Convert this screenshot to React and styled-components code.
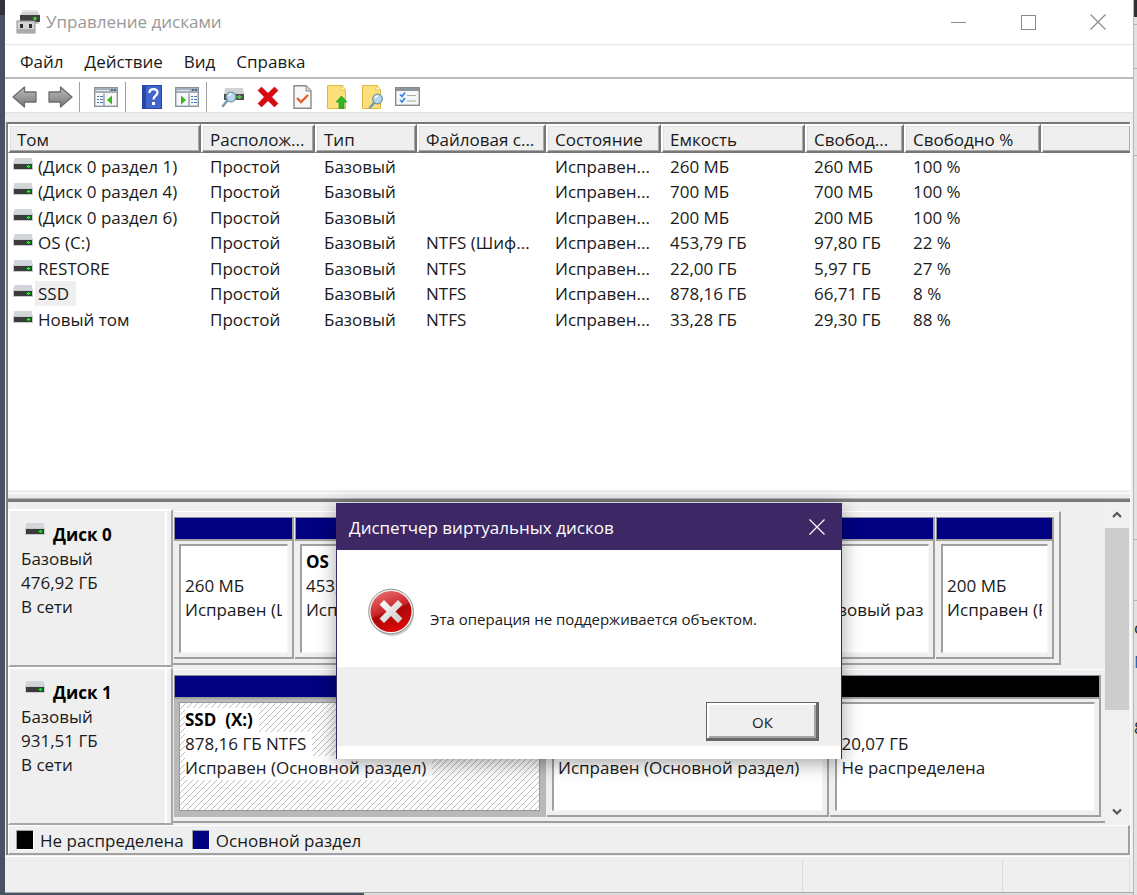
import React from 'react';
import styled, { createGlobalStyle, css } from 'styled-components';

const GlobalStyle = createGlobalStyle`
  * { box-sizing: border-box; }
  body {
    margin: 0;
    background: #4a5163;
    color: #1a1a1a;
    font-family: 'Open Sans', 'Noto Sans', sans-serif;
    font-size: 17px;
  }
  button { font: inherit; color: inherit; border: 0; background: none; padding: 0; }
`;

const Desktop = styled.div`
  position: relative;
  display: flex;
  min-height: 100vh;
  overflow: hidden;
`;

const LeftEdge = styled.div`
  flex: 0 0 5px;
  background: linear-gradient(#313338 0 15px, #4a5163 15px);
`;

const RightEdge = styled.div`
  flex: 0 0 4px;
  overflow: hidden;
  background: #e2e2e2;
  border-left: 1px solid #b8b8b8;
`;

const EdgeSlice = styled.div`
  height: ${(p) => p.$h}px;
  line-height: 26px;
  overflow: hidden;
  color: ${(p) => p.$color || '#222'};
  background: ${(p) => p.$bg || 'transparent'};
  border-bottom: ${(p) => (p.$line ? '1px solid #b5b5b5' : '0')};
`;

const Column = styled.div`
  flex: 1;
  min-width: 0;
  display: flex;
  flex-direction: column;
`;

const Window = styled.main`
  flex: 1;
  display: flex;
  flex-direction: column;
  background: #efefef;
`;

const DesktopBottom = styled.div`
  height: 3px;
  border-top: 1px solid #a9a9a9;
  background: linear-gradient(90deg, #4a5163 0 359px, #dcdcdc 359px);
`;

const TitleBar = styled.header`
  display: flex;
  align-items: center;
  height: 45px;
  padding-left: 11px;
  background: #fff;
  border-bottom: 1px solid #e6e6e6;
`;

const Title = styled.h1`
  flex: 1;
  margin: 0 0 0 5px;
  font-size: 17px;
  font-weight: 400;
  line-height: 42px;
  color: #999;
`;

const CaptionButton = styled.button`
  display: grid;
  place-items: center;
  width: 70px;
  height: 42px;
`;

const MenuBar = styled.nav`
  display: flex;
  gap: 21px;
  height: 34px;
  padding-left: 15px;
  background: #fff;
  border-bottom: 2px solid #b9bdc1;
`;

const MenuItem = styled.button`
  line-height: 34px;
  white-space: nowrap;
`;

const Toolbar = styled.div`
  display: flex;
  height: 34px;
  padding-left: 2px;
  background: #fff;
  border-bottom: 1px solid #e2e2e2;
`;

const ToolButton = styled.button`
  display: grid;
  place-items: center;
  width: 35px;
  padding-top: 2px;
`;

const ToolSeparator = styled.span`
  width: 1px;
  margin: 3px 8px 0 2px;
  background: #a0a0a0;
`;

const Frame = styled.div`
  flex: 1;
  display: flex;
  flex-direction: column;
  margin: 9px 2px 0 1px;
  border-left: 2px solid #808080;
  border-right: 1px solid #fff;
`;

const VolumePane = styled.section`
  flex: 1;
  min-height: 240px;
  background: #fff;
  border-top: 2px solid #777;
`;

const VolumeTable = styled.table`
  width: 100%;
  table-layout: fixed;
  border-collapse: separate;
  border-spacing: 0;
  line-height: 25px;

  th, td { overflow: hidden; white-space: nowrap; text-align: left; font-weight: 400; }
  th {
    height: 29px;
    padding: 3px 0 0 7px;
    line-height: 22px;
    background: #efefef;
    border: 2px solid #fff;
    border-right-color: #777;
    border-bottom-color: #777;
    box-shadow: inset -1px -1px 0 #a8a8a8, inset 1px 1px 0 #e0e0e0;
  }
  th:last-child { border-right: 0; }
  td { height: 26px; padding: 0 0 0 9px; }
  tbody tr:nth-child(even) td { height: 25px; }
  td:first-child { padding-left: 5px; }
`;

const VolumeName = styled.span`
  display: flex;
  align-items: center;

  svg { margin-bottom: 5px; }
`;

const VolumeLabel = styled.span`
  margin-left: 2px;
  padding: 0 7px 0 3px;
  background: ${(p) => (p.$selected ? '#efefef' : 'transparent')};
`;

const Splitter = styled.div`
  height: 12px;
  background: #ebebeb;
  border-top: 3px solid #efefef;
  border-bottom: 3px solid #7a7a7a;
  box-shadow: inset 0 1px 0 #fff, inset 0 -1px 0 #b5b5b5;
`;

const GraphPane = styled.section`
  display: flex;
`;

const DiskList = styled.div`
  flex: 1;
  min-width: 0;
  padding-top: 7px;
`;

const DiskRow = styled.article`
  display: flex;
  height: 158px;
`;

const DiskInfo = styled.div`
  flex: 0 0 165px;
  padding: 12px 0 0 11px;
  line-height: 24px;
  border: solid #fff;
  border-width: 2px 2px 0 2px;
  border-right-color: #a6a6a6;
  border-bottom: 2px solid #a6a6a6;
  box-shadow: inset -4px 0 0 #efefef, inset -6px 0 0 #fff;
`;

const DiskHeading = styled.h2`
  display: flex;
  align-items: flex-start;
  gap: 8px;
  margin: 0;
  padding-left: 4px;
  font-size: 17px;
  line-height: 24px;
  font-weight: 700;
  color: #000;
`;

const Partitions = styled.div`
  flex: 1;
  min-width: 0;
  display: flex;
  gap: 1px;
  margin: 2px ${(p) => p.$inset}px 2px 0;
  padding: 5px ${(p) => (p.$inset ? 5 : 4)}px 4px 1px;
  border: 1px solid #a0a0a0;
  border-left: 0;
  border-top-color: #fff;
  border-right-width: ${(p) => (p.$inset ? 2 : 0)}px;
  border-bottom-width: 2px;
`;

const PartitionCell = styled.div`
  flex: ${(p) => p.$size} 1 0;
  min-width: 0;
  display: flex;
  flex-direction: column;
  border-right: 2px solid #a0a0a0;
  border-bottom: 2px solid #a0a0a0;
  ${(p) => p.$selected && css`border-color: #b9b9b9;`}
`;

const PartitionBar = styled.div`
  height: 24px;
  background: ${(p) => p.$color};
  border: 1px solid #8c8c9c;
  border-bottom: 2px solid #a0a0a0;
  border-right-width: 0;
`;

const PartitionBody = styled.div`
  flex: 1;
  display: flex;
  padding: 3px 4px 4px 5px;
  background: ${(p) => (p.$selected ? '#b9b9b9' : '#efefef')};
`;

const PartitionBox = styled.div`
  flex: 1;
  min-width: 0;
  padding: 4px 5px 0 4px;
  line-height: 24px;
  border: 1px solid #f6f6f6;
  border-top: 2px solid #a0a0a0;
  border-left: 2px solid #a0a0a0;
  background: #fff;
  ${(p) => p.$selected && css`
    border: 1px solid #999;
    padding: 5px 5px 0 5px;
    background: linear-gradient(to bottom right, #fff 43%, #bdbdbd 48%, #bdbdbd 52%, #fff 57%) 0 0 / 6px 6px;
  `}
`;

const PartitionText = styled.div`
  overflow: hidden;
`;

const PartitionLine = styled.div`
  width: fit-content;
  min-height: 24px;
  padding-right: 6px;
  white-space: pre;
  background: #fff;
  font-weight: ${(p) => (p.$bold ? 700 : 400)};
  color: ${(p) => (p.$bold ? '#000' : 'inherit')};
`;

const ScrollTrack = styled.div`
  flex: 0 0 25px;
  display: flex;
  flex-direction: column;
  padding-right: 1px;
  background: #f0f0f0;
`;

const ScrollButton = styled.button`
  display: grid;
  place-items: center;
  height: 26px;
`;

const ScrollThumb = styled.div`
  height: 182px;
  margin-bottom: auto;
  background: #cdcdcd;
`;

const Legend = styled.div`
  display: flex;
  align-items: center;
  gap: 8px;
  height: 30px;
  padding: 1px 0 0 7px;
  border: 1px solid #fff;
  border-right: 2px solid #a0a0a0;
  border-bottom: 2px solid #a0a0a0;
`;

const Swatch = styled.span`
  width: 18px;
  height: 20px;
  background: ${(p) => p.$color};
  border: 1px solid #a0a0a0;
  border-right-color: #fff;
  border-bottom-color: #fff;
`;

const LegendItem = styled.span`
  display: flex;
  align-items: center;
  gap: 6px;
`;

const StatusBar = styled.footer`
  display: flex;
  height: 36px;
  margin: 1px 3px 0 0;
  padding-top: 3px;
  border-top: 1px solid #fff;
`;

const StatusCell = styled.span`
  flex: ${(p) => p.$flex};
  border-right: 1px solid #dcdcdc;
`;

const Dialog = styled.div`
  position: absolute;
  left: 336px;
  top: 503px;
  width: 506px;
  background: #fff;
  border: 1px solid #3d2865;
  border-bottom: 0;
  box-shadow: 0 4px 18px rgba(0, 0, 0, 0.36);
`;

const DialogTitle = styled.div`
  display: flex;
  justify-content: space-between;
  align-items: center;
  height: 46px;
  padding: 0 2px 0 12px;
  background: #3d2865;
  color: #fff;
`;

const DialogHeading = styled.h2`
  margin: 0;
  font-size: 17px;
  font-weight: 400;
`;

const DialogClose = styled.button`
  display: grid;
  place-items: center;
  width: 44px;
  height: 46px;
`;

const DialogBody = styled.div`
  display: flex;
  align-items: center;
  gap: 14px;
  height: 117px;
  padding: 6px 0 0 29px;
`;

const DialogMessage = styled.p`
  margin: 14px 0 0;
  font-size: 15px;
  line-height: 20px;
  white-space: nowrap;
`;

const DialogFooter = styled.div`
  display: flex;
  justify-content: flex-end;
  height: 79px;
  margin-bottom: 13px;
  padding: 35px 22px 5px 0;
  background: #efefef;
`;

const OkButton = styled.button`
  width: 113px;
  height: 39px;
  font-size: 15px;
  background: #efefef;
  border: 1px solid #666;
  box-shadow: inset -2px -2px 0 #696969, inset 2px 2px 0 #fff, inset -4px -4px 0 #a5a5a5;
`;

const SmallDrive = () => (
  <svg width="20" height="12" viewBox="0 0 20 12" aria-hidden="true">
    <path d="M1.500 0h17L20 6H0z" fill="#d2d5da" />
    <rect y="5" width="20" height="7" fill="#c8cacd" />
    <rect x="1" y="6" width="18" height="5" fill="#3b3b3b" />
    <rect x="13" y="7" width="5" height="3" fill="#156b20" />
    <rect x="14" y="8" width="3" height="1" fill="#4dff4d" />
    <rect x="15" y="7" width="1" height="3" fill="#35d83b" />
  </svg>
);

const AppIcon = () => (
  <svg width="25" height="24" viewBox="0 0 25 24" aria-hidden="true">
    <path d="M7 0h14l3 6H4z" fill="#cfd2d4" />
    <path d="M7 0h14l1 2H6z" fill="#e6e7e8" />
    <rect x="4" y="5" width="20" height="7" fill="#404241" />
    <path d="M16 12h7v2h-7z" fill="#c9cbcc" />
    <circle cx="19" cy="8.500" r="1.700" fill="#2fe02f" />
    <rect x="1" y="11" width="18" height="12" fill="#d3d4d5" stroke="#8d8f91" />
    <path d="M1 19h18v4H1z" fill="#a9abad" />
    <rect x="4" y="14" width="3" height="4" fill="#2f2f2f" />
    <rect x="13" y="14" width="3" height="4" fill="#2f2f2f" />
  </svg>
);

const Arrow = ({ flip }) => (
  <svg width="26" height="24" viewBox="0 0 26 24" aria-hidden="true">
    <defs>
      <linearGradient id={flip ? 'ar' : 'al'} x2="0" y2="1">
        <stop stopColor="#bdbdbd" /><stop offset="1" stopColor="#777" />
      </linearGradient>
    </defs>
    <path
      d="M1 12L12.500 2v5H24v10H12.500v5z"
      transform={flip ? 'translate(26 0) scale(-1 1)' : undefined}
      fill={`url(#${flip ? 'ar' : 'al'})`} stroke="#6c6c6c" strokeWidth="1.300" strokeLinejoin="round"
    />
  </svg>
);

const PanelIcon = ({ right }) => (
  <svg width="24" height="20" viewBox="0 0 24 20" aria-hidden="true">
    <rect x=".7" y=".7" width="22.600" height="18.600" fill="#f5f7f8" stroke="#8c949b" strokeWidth="1.400" />
    <rect x="1" y="1" width="22" height="5" fill="#a3afba" />
    <path d="M2 3.500h13" stroke="#e4e9ee" />
    <path d="M17 3h2M20 3h2" stroke="#34506e" strokeWidth="1.500" />
    <path d={right ? 'M14 6.500v13' : 'M10 6.500v13'} stroke="#8c949b" strokeWidth="1.300" />
    {right
      ? <path d="M16 9.500h2M19 9.500h3M16 12.500h2M19 12.500h3M16 15.500h2M19 15.500h3" stroke="#4678b4" />
      : <path d="M3 9.500h2M6 9.500h3M3 12.500h2M6 12.500h3M3 15.500h2M6 15.500h3" stroke="#4678b4" />}
    <path d={right ? 'M6 8.500l5 4.500-5 4.500z' : 'M18 8.500l-5 4.500 5 4.500z'} fill="#3fb21f" />
  </svg>
);

const HelpIcon = () => (
  <svg width="20" height="24" viewBox="0 0 20 24" aria-hidden="true">
    <rect width="20" height="24" fill="#2a45a5" />
    <rect x="4" y="1" width="15" height="22" fill="#4065cf" />
    <path d="M7.500 8c0-5 8-5 8-.5 0 3.200-4 3.200-4 7" fill="none" stroke="#fff" strokeWidth="2.300" />
    <rect x="10" y="17" width="3" height="3" fill="#fff" />
  </svg>
);

const Lens = ({ cx, cy, tail }) => (
  <g>
    <path d={tail} stroke="#7397b4" strokeWidth="2.400" strokeLinecap="round" />
    <circle cx={cx} cy={cy} r="4.800" fill="#b6d8ea" stroke="#7595ac" strokeWidth="1.300" />
    <path d={`M${cx - 2.5} ${cy - 1}q1-2 3-2`} stroke="#fff" strokeWidth="1.300" fill="none" />
  </g>
);

const DriveSearchIcon = () => (
  <svg width="24" height="22" viewBox="0 0 24 22" aria-hidden="true">
    <path d="M4 2h18l1 7H3z" fill="#d0d2d3" />
    <rect x="3" y="8" width="20" height="6" fill="#4d4f50" />
    <path d="M16 11h5M18.500 9v4" stroke="#35e035" strokeWidth="1.500" />
    <Lens cx={10} cy={11} tail="M6 15L2 20" />
  </svg>
);

const DeleteIcon = () => (
  <svg width="22" height="22" viewBox="0 0 22 22" aria-hidden="true">
    <path d="M4.500 1L11 7.300 17.500 1 21 4.500 14.700 11 21 17.500 17.500 21 11 14.700 4.500 21 1 17.500 7.300 11 1 4.500z" fill="#da0a14" stroke="#b00" strokeWidth=".5" />
  </svg>
);

const CheckDocIcon = () => (
  <svg width="19" height="24" viewBox="0 0 19 24" aria-hidden="true">
    <path d="M1 .7h12l5 5v17.600H1z" fill="#f7f8fa" stroke="#8a8a8a" strokeWidth="1.400" />
    <path d="M13 1v5h5" fill="#ddd" stroke="#8a8a8a" />
    <path d="M4 13l4 4 7-7" fill="none" stroke="#ee5a24" strokeWidth="2.400" />
  </svg>
);

const FolderIcon = ({ search }) => (
  <svg width="21" height="24" viewBox="0 0 21 24" aria-hidden="true">
    <path d="M.5.500h15l3 5v18H.5z" fill="#fbdf7b" stroke="#dfb93e" />
    <path d="M13 5h5.500L15.500.500z" fill="#fff1b8" stroke="#dfb93e" strokeWidth=".6" />
    {search
      ? <Lens cx={15.5} cy={14} tail="M12 18L8 22.500" />
      : <path d="M14.500 11l5.500 6h-3v6.500h-5V17H9z" fill="#2fb52b" stroke="#169018" strokeWidth=".6" />}
  </svg>
);

const ChecklistIcon = () => (
  <svg width="25" height="19" viewBox="0 0 25 19" aria-hidden="true">
    <rect x=".7" y=".7" width="23.600" height="17.600" fill="#f6f7f8" stroke="#878b90" strokeWidth="1.400" />
    <rect x="1" y="1" width="23" height="3" fill="#8e959c" />
    <path d="M5 7.500l2 2 3-4M5 13l2 2 3-4" fill="none" stroke="#3386e0" strokeWidth="1.700" />
    <path d="M12 8.500h9M12 14h9" stroke="#aaa" strokeWidth="1.200" />
  </svg>
);

const ErrorIcon = () => (
  <svg width="50" height="50" viewBox="0 0 50 50" aria-hidden="true">
    <defs>
      <linearGradient id="err" x1=".2" y1="0" x2=".6" y2="1">
        <stop stopColor="#e87070" /><stop offset=".48" stopColor="#cb2429" />
        <stop offset=".55" stopColor="#a90709" /><stop offset="1" stopColor="#e00a0a" />
      </linearGradient>
      <linearGradient id="errx" x2="1" y2="1">
        <stop stopColor="#fff" /><stop offset="1" stopColor="#c9c9c9" />
      </linearGradient>
    </defs>
    <ellipse cx="26" cy="27" rx="22" ry="22" fill="#000" opacity=".2" />
    <circle cx="25" cy="24.500" r="22.300" fill="#f3f3f3" stroke="#929292" />
    <circle cx="25" cy="24.500" r="20.500" fill="url(#err)" />
    <path d="M18 13l7 7 7-7 4.500 4.500-7 7 7 7L32 36l-7-7-7 7-4.500-4.500 7-7-7-7z" fill="url(#errx)" />
  </svg>
);

const Chevron = ({ down }) => (
  <svg width="10" height="8" viewBox="0 0 10 8" aria-hidden="true">
    <path d={down ? 'M1 1.500l4 4 4-4' : 'M1 6l4-4 4 4'} fill="none" stroke="#555" strokeWidth="2.200" />
  </svg>
);

const CloseGlyph = ({ color }) => (
  <svg width="16" height="16" viewBox="0 0 16 16" aria-hidden="true">
    <path d="M.5.500l15 15M15.500.500l-15 15" stroke={color} strokeWidth="1.200" />
  </svg>
);

const NAVY = '#000080';

const columns = [
  ['Том', 193], ['Располож...', 114], ['Тип', 102], ['Файловая с...', 129], ['Состояние', 115],
  ['Емкость', 144], ['Свобод...', 99], ['Свободно %', 137],
];

const volumes = [
  ['(Диск 0 раздел 1)', '', '260 МБ', '260 МБ', '100 %'],
  ['(Диск 0 раздел 4)', '', '700 МБ', '700 МБ', '100 %'],
  ['(Диск 0 раздел 6)', '', '200 МБ', '200 МБ', '100 %'],
  ['OS (C:)', 'NTFS (Шиф...', '453,79 ГБ', '97,80 ГБ', '22 %'],
  ['RESTORE', 'NTFS', '22,00 ГБ', '5,97 ГБ', '27 %'],
  ['SSD', 'NTFS', '878,16 ГБ', '66,71 ГБ', '8 %'],
  ['Новый том', 'NTFS', '33,28 ГБ', '29,30 ГБ', '88 %'],
];

const disks = [
  {
    name: 'Диск 0', size: '476,92 ГБ', inset: 44,
    parts: [
      { size: 119, lines: ['', '260 МБ', 'Исправен (Шифрованный)'] },
      { size: 423, lines: ['OS  (C:)', '453,79 ГБ NTFS', 'Исправен (Загрузка)'] },
      { size: 218, lines: ['', '22,00 ГБ NTFS', 'Исправен (Базовый раздел)'] },
      { size: 117, lines: ['', '200 МБ', 'Исправен (Раздел)'] },
    ],
  },
  {
    name: 'Диск 1', size: '931,51 ГБ', inset: 0,
    parts: [
      { size: 372, selected: true, lines: ['SSD  (X:)', '878,16 ГБ NTFS', 'Исправен (Основной раздел)'] },
      { size: 282, lines: ['', '', 'Исправен (Основной раздел)'] },
      { size: 270, color: '#000', lines: ['', '20,07 ГБ', 'Не распределена'] },
    ],
  },
];

const Partition = ({ size, selected, color = NAVY, lines }) => (
  <PartitionCell $size={size} $selected={selected}>
    <PartitionBar $color={color} />
    <PartitionBody $selected={selected}>
      <PartitionBox $selected={selected}>
        <PartitionText>
          {lines.map((line, i) => <PartitionLine key={i} $bold={i === 0}>{line}</PartitionLine>)}
        </PartitionText>
      </PartitionBox>
    </PartitionBody>
  </PartitionCell>
);

export default function App() {
  return (
    <Desktop>
      <GlobalStyle />
      <LeftEdge />
      <Column>
        <Window>
          <TitleBar>
            <AppIcon />
            <Title>Управление дисками</Title>
            <CaptionButton aria-label="Свернуть">
              <svg width="15" height="1"><rect width="15" height="1" fill="#8a8a8a" /></svg>
            </CaptionButton>
            <CaptionButton aria-label="Развернуть">
              <svg width="15" height="15"><rect x=".5" y=".5" width="14" height="14" fill="none" stroke="#8a8a8a" /></svg>
            </CaptionButton>
            <CaptionButton aria-label="Закрыть"><CloseGlyph color="#8a8a8a" /></CaptionButton>
          </TitleBar>
          <MenuBar>
            {['Файл', 'Действие', 'Вид', 'Справка'].map((m) => <MenuItem key={m}>{m}</MenuItem>)}
          </MenuBar>
          <Toolbar>
            <ToolButton aria-label="Назад"><Arrow /></ToolButton>
            <ToolButton aria-label="Вперед"><Arrow flip /></ToolButton>
            <ToolSeparator />
            <ToolButton aria-label="Дерево консоли"><PanelIcon /></ToolButton>
            <ToolSeparator />
            <ToolButton aria-label="Справка"><HelpIcon /></ToolButton>
            <ToolButton aria-label="Панель действий"><PanelIcon right /></ToolButton>
            <ToolSeparator />
            <ToolButton aria-label="Обновить"><DriveSearchIcon /></ToolButton>
            <ToolButton aria-label="Удалить"><DeleteIcon /></ToolButton>
            <ToolButton aria-label="Свойства"><CheckDocIcon /></ToolButton>
            <ToolButton aria-label="Открыть"><FolderIcon /></ToolButton>
            <ToolButton aria-label="Обзор"><FolderIcon search /></ToolButton>
            <ToolButton aria-label="Параметры"><ChecklistIcon /></ToolButton>
          </Toolbar>

          <Frame>
            <VolumePane>
              <VolumeTable>
                <colgroup>
                  {columns.map(([name, width]) => <col key={name} width={width} />)}
                  <col />
                </colgroup>
                <thead>
                  <tr>
                    {columns.map(([name]) => <th key={name} scope="col">{name}</th>)}
                    <th aria-hidden="true" />
                  </tr>
                </thead>
                <tbody>
                  {volumes.map(([name, fs, size, free, percent]) => (
                    <tr key={name}>
                      <td>
                        <VolumeName>
                          <SmallDrive />
                          <VolumeLabel $selected={name === 'SSD'}>{name}</VolumeLabel>
                        </VolumeName>
                      </td>
                      <td>Простой</td>
                      <td>Базовый</td>
                      <td>{fs}</td>
                      <td>Исправен...</td>
                      <td>{size}</td>
                      <td>{free}</td>
                      <td>{percent}</td>
                      <td />
                    </tr>
                  ))}
                </tbody>
              </VolumeTable>
            </VolumePane>
            <Splitter />
            <GraphPane>
              <DiskList>
                {disks.map((disk) => (
                  <DiskRow key={disk.name}>
                    <DiskInfo>
                      <DiskHeading><SmallDrive />{disk.name}</DiskHeading>
                      <div>Базовый</div>
                      <div>{disk.size}</div>
                      <div>В сети</div>
                    </DiskInfo>
                    <Partitions $inset={disk.inset}>
                      {disk.parts.map((part) => <Partition key={part.size} {...part} />)}
                    </Partitions>
                  </DiskRow>
                ))}
              </DiskList>
              <ScrollTrack>
                <ScrollButton aria-label="Прокрутить вверх"><Chevron /></ScrollButton>
                <ScrollThumb />
                <ScrollButton aria-label="Прокрутить вниз"><Chevron down /></ScrollButton>
              </ScrollTrack>
            </GraphPane>
            <Legend>
              <LegendItem><Swatch $color="#000" />Не распределена</LegendItem>
              <LegendItem><Swatch $color={NAVY} />Основной раздел</LegendItem>
            </Legend>
          </Frame>
          <StatusBar>
            <StatusCell $flex="1 1 0" />
            <StatusCell $flex="0 0 200px" />
            <StatusCell $flex="0 0 127px" />
          </StatusBar>
        </Window>
        <DesktopBottom />
      </Column>
      <RightEdge>
        <EdgeSlice $h={17} $bg="#2f3033" />
        <EdgeSlice $h={8} $line />
        <EdgeSlice $h={44} $line />
        <EdgeSlice $h={87} $line />
        <EdgeSlice $h={384} $line />
        <EdgeSlice $h={61} $line />
        <EdgeSlice $h={14} />
        <EdgeSlice $h={34}>с</EdgeSlice>
        <EdgeSlice $h={66} $color="#1c5ca8">N</EdgeSlice>
        <EdgeSlice $h={30}>8</EdgeSlice>
      </RightEdge>

      <Dialog role="dialog" aria-labelledby="dialog-title">
        <DialogTitle>
          <DialogHeading id="dialog-title">Диспетчер виртуальных дисков</DialogHeading>
          <DialogClose aria-label="Закрыть сообщение"><CloseGlyph color="#fff" /></DialogClose>
        </DialogTitle>
        <DialogBody>
          <ErrorIcon />
          <DialogMessage>Эта операция не поддерживается объектом.</DialogMessage>
        </DialogBody>
        <DialogFooter><OkButton>ОК</OkButton></DialogFooter>
      </Dialog>
    </Desktop>
  );
}
